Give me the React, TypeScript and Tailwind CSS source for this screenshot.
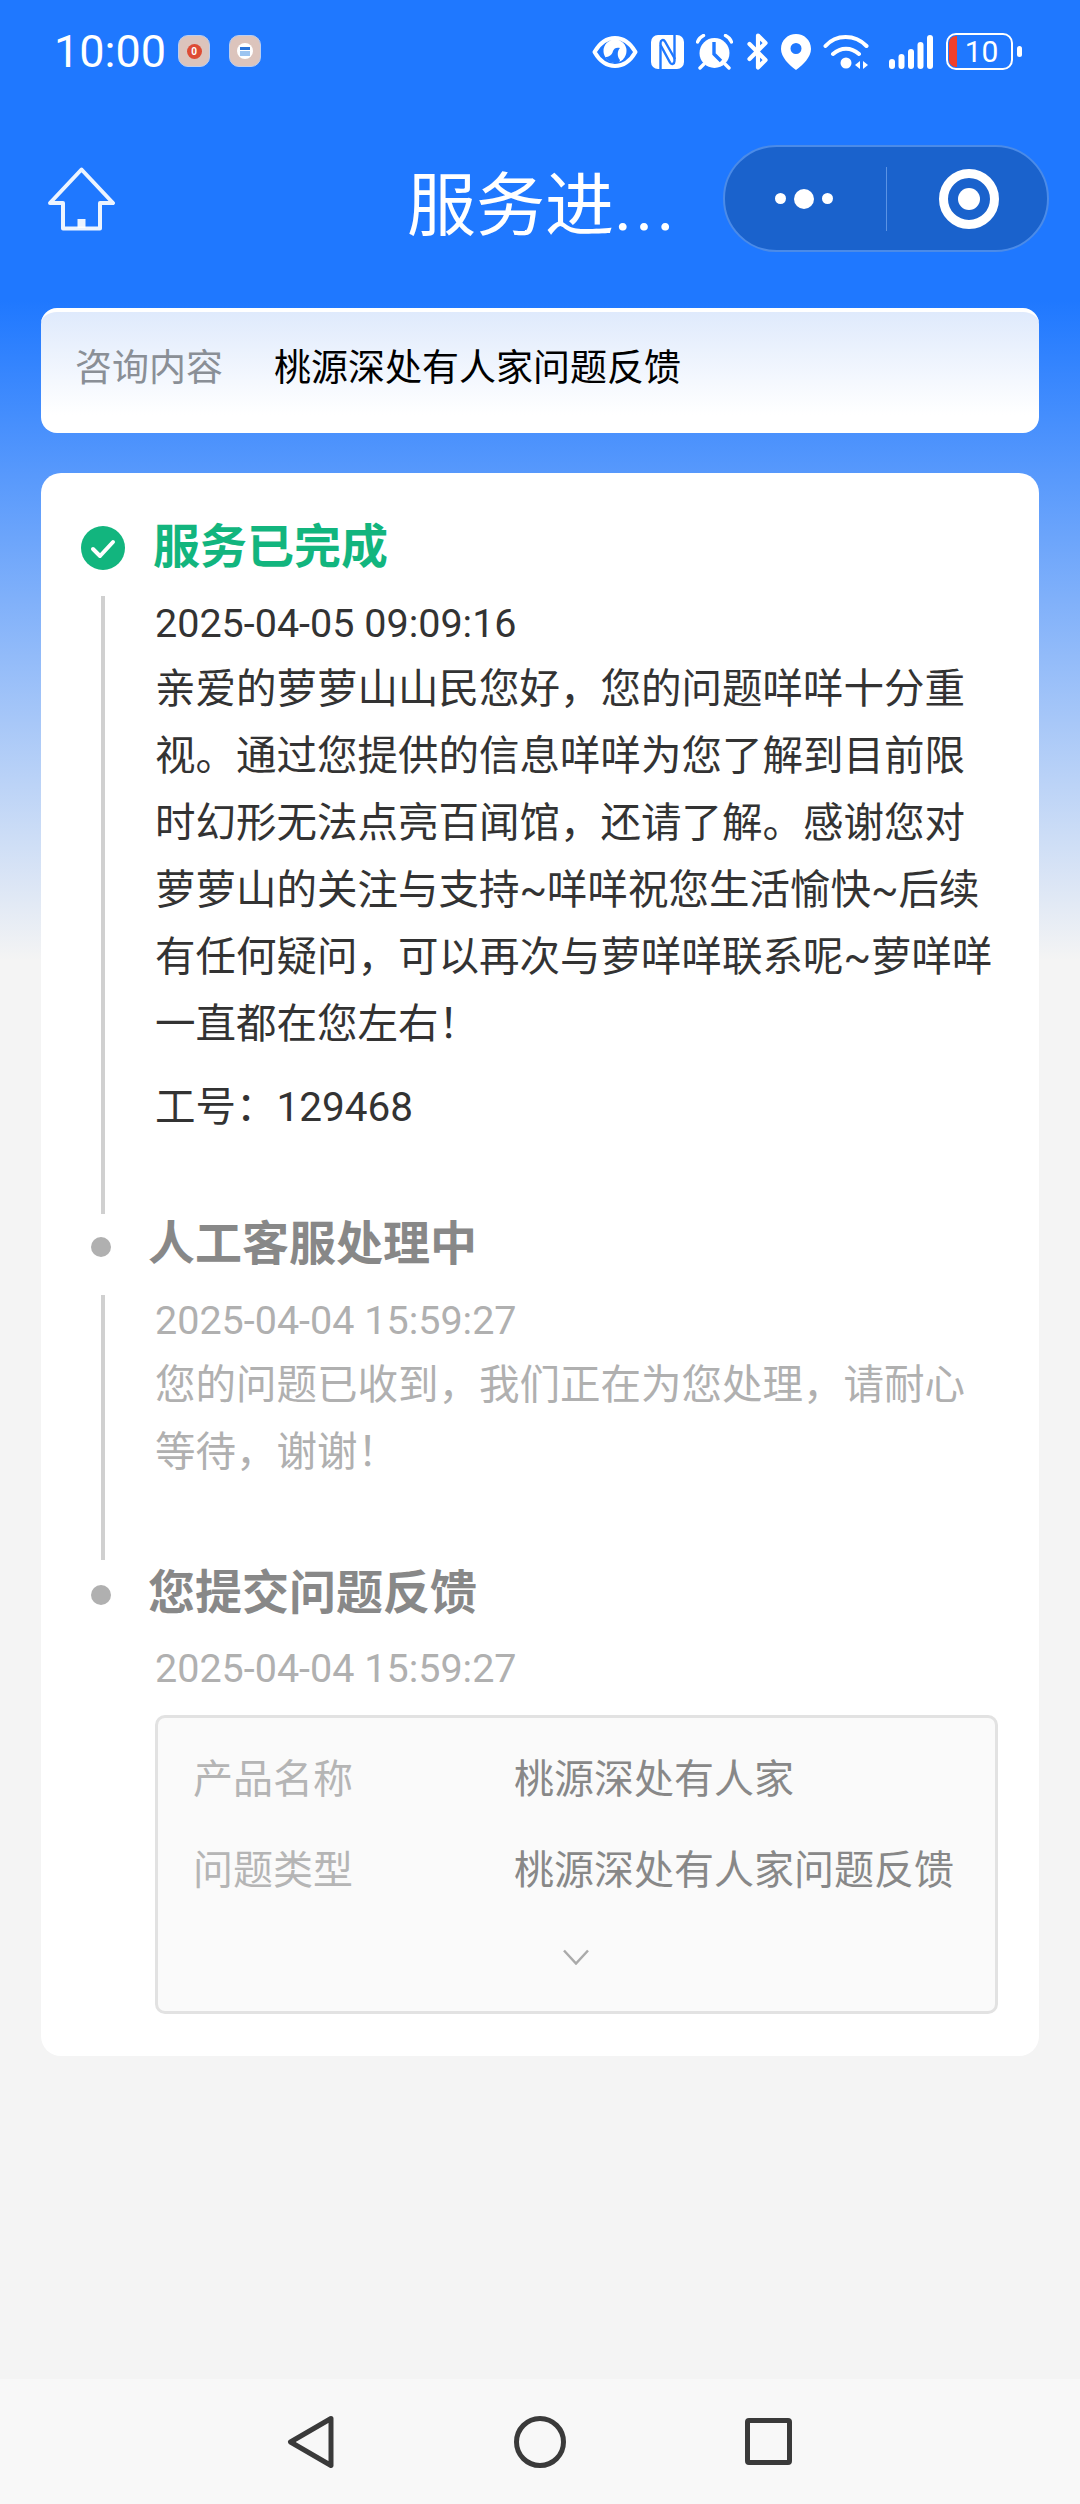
const cjk = "font-['Roboto','Noto_Sans_CJK_SC',sans-serif]";

function StatusIcons() {
  return (
    <div className="flex items-center">
      {/* eye */}
      <svg className="w-[46px] h-[32px]" viewBox="0 0 46 32">
        <path d="M2.500 16C8 6.500 15 2 23 2S38 6.500 43.500 16C38 25.500 31 30 23 30S8 25.500 2.500 16Z" fill="#1f78ff" stroke="white" strokeWidth="4" strokeLinejoin="round" />
        <circle cx="23" cy="15" r="11.500" fill="white" />
        <path d="M13 21c4 0 7-2 8-6 1-3 4-4 7-3-3 3-3 9 0 12l-1 3c-6 1-11-1-14-6Z" fill="#1f78ff" />
      </svg>
      {/* nfc */}
      <svg className="w-[33px] h-[34px] ml-[13px]" viewBox="0 0 33 34">
        <rect width="33" height="34" rx="7" fill="white" />
        <path d="M9.500 34V8c0-3 3-4 4.500-1.500L24 24" fill="none" stroke="#1f78ff" strokeWidth="2.400" />
        <path d="M23.500 0v26c0 3-3 4-4.500 1.500L9.500 10" fill="none" stroke="#1f78ff" strokeWidth="2.400" />
      </svg>
      {/* alarm */}
      <svg className="w-[37px] h-[36px] ml-[12px]" viewBox="0 0 37 36">
        <circle cx="18.500" cy="19" r="15" fill="white" />
        <path d="M18 8v12l7 7" fill="none" stroke="#1f78ff" strokeWidth="3.400" />
        <path d="M1.500 8c1-3 3-5 6-6.500M35.500 8c-1-3-3-5-6-6.500M4 34l4-4M33 34l-4-4" fill="none" stroke="white" strokeWidth="3.400" strokeLinecap="round" />
      </svg>
      {/* bluetooth, with slash */}
      <svg className="w-[21px] h-[37px] ml-[14px]" viewBox="0 0 21 37">
        <path d="M2.500 11l16 16-7.500 7.500V2.500L18.500 10 2.500 26" fill="none" stroke="white" strokeWidth="4.200" strokeLinejoin="round" strokeLinecap="round" />
      </svg>
      {/* pin */}
      <svg className="w-[30px] h-[36px] ml-[13px]" viewBox="0 0 30 36">
        <path fillRule="evenodd" d="M15 0c8 0 15 6 15 15 0 8-8 16-15 21C8 31 0 23 0 15 0 6 7 0 15 0Zm0 9a5.500 5.500 0 1 0 0 11 5.500 5.500 0 0 0 0-11Z" fill="white" />
      </svg>
      {/* wifi */}
      <svg className="w-[46px] h-[36px] ml-[12px]" viewBox="0 0 46 36">
        <path d="M2.500 12C13 0 32 0 43.500 12M10 20c8-7 18-7 26 0" fill="none" stroke="white" strokeWidth="4" strokeLinecap="round" />
        <circle cx="23" cy="29" r="5.500" fill="white" />
        <path d="M37 27v8l-5-4ZM40 27v8l5-4Z" fill="white" />
      </svg>
      {/* signal */}
      <svg className="w-[44px] h-[36px] ml-[20px]" viewBox="0 0 44 36">
        <rect x="0" y="25" width="6" height="10" rx="3" fill="white" />
        <rect x="9.500" y="20" width="6" height="15" rx="3" fill="white" />
        <rect x="19" y="15" width="6" height="20" rx="3" fill="white" />
        <rect x="28.500" y="8" width="6" height="27" rx="3" fill="white" />
        <rect x="38" y="1" width="6" height="34" rx="3" fill="white" />
      </svg>
      {/* battery */}
      <div className="relative w-[67px] h-[37px] ml-[13px] rounded-[10px] border-[2.5px] border-white flex items-center justify-center">
        <div className="absolute left-[1px] top-[1px] bottom-[1px] w-[8px] rounded-l-[7px] bg-[#f0402a]" />
        <span className="pl-[4px] text-[30px] leading-none text-white font-['Roboto',sans-serif]">10</span>
      </div>
      <div className="w-[5px] h-[11px] ml-[4px] rounded-full bg-white" />
    </div>
  );
}

function NotifyChip({ children }: { children: React.ReactNode }) {
  return (
    <div className="w-[32px] h-[32px] rounded-[10px] bg-[#dcc4bc] border border-[#b9cdf0] flex items-center justify-center">
      {children}
    </div>
  );
}

function TimelineLine({ className }: { className: string }) {
  return <div className={`absolute left-[60px] w-[4px] bg-[#d0d0d0] ${className}`} />;
}

export default function App() {
  return (
    <div className={`relative w-[1080px] h-[2504px] flex flex-col bg-[linear-gradient(to_bottom,#1f78ff_0px,#1f78ff_300px,#f4f4f4_960px,#f4f4f4_100%)] ${cjk}`}>
      {/* status bar */}
      <div className="h-[105px] pl-[54px] pr-[58px] pt-[33px] flex items-start justify-between">
        <div className="flex items-center h-[36px]">
          <span className="w-[124px] text-[45px] leading-none text-white font-['Roboto',sans-serif]">10:00</span>
          <NotifyChip>
            <div className="w-[15px] h-[15px] rounded-full bg-[#dd4b34] text-white text-[10px] leading-[15px] text-center font-bold">0</div>
          </NotifyChip>
          <div className="w-[19px]" />
          <NotifyChip>
            <div className="w-[16px] h-[16px] rounded-full bg-white flex flex-col items-center justify-center">
              <div className="w-[10px] h-[3px] bg-[#2a74d8]" />
              <div className="w-[10px] h-[5px] mt-[1px] bg-[#9cc4f0]" />
            </div>
          </NotifyChip>
        </div>
        <StatusIcons />
      </div>

      {/* nav bar */}
      <div className="h-[107px] mt-[40px] pl-[48px] pr-[31px] flex items-center">
        <svg className="w-[67px] h-[64px]" viewBox="0 0 67 64" fill="none" stroke="white" strokeOpacity="0.92" strokeWidth="4" strokeLinejoin="round" strokeLinecap="round">
          <path d="M33.500 2.500L65 36H52V61.500H15V36H2Z" />
          <path d="M33.500 61V52" strokeWidth="8" strokeLinecap="butt" />
        </svg>
        <div className="ml-[292px] pt-[16px] text-[69px] leading-[86px] text-white whitespace-nowrap">
          服务进<span className="tracking-[3px]">...</span>
        </div>
        <div className="ml-auto w-[326px] h-[107px] rounded-full bg-[#1a62cc] border-2 border-[#4b8be8] flex items-center">
          <div className="w-[161px] pr-[3px] flex items-center justify-center gap-[8px]">
            <div className="w-[11px] h-[11px] rounded-full bg-white" />
            <div className="w-[20px] h-[20px] rounded-full bg-white" />
            <div className="w-[11px] h-[11px] rounded-full bg-white" />
          </div>
          <div className="w-[1px] h-[64px] bg-[#5b93e4]" />
          <div className="flex-1 pl-[4px] flex items-center justify-center">
            <div className="w-[60px] h-[60px] rounded-full border-[9px] border-white flex items-center justify-center">
              <div className="w-[22px] h-[22px] rounded-full bg-white" />
            </div>
          </div>
        </div>
      </div>

      {/* query card */}
      <div className="mx-[41px] mt-[56px] h-[125px] rounded-[16px] border-t-[4px] border-white bg-[linear-gradient(to_bottom,#dfeafc,#ffffff_85%)] pl-[34px] pb-[8px] flex items-center text-[37px] leading-none">
        <span className="w-[199px] text-[#8a8f96]">咨询内容</span>
        <span className="text-black">桃源深处有人家问题反馈</span>
      </div>

      {/* timeline card */}
      <div className="relative mx-[41px] mt-[40px] h-[1583px] rounded-[20px] bg-white pl-[114px] pr-[41px] pt-[44px]">
        <svg className="absolute left-[40px] top-[53px] w-[44px] h-[44px]" viewBox="0 0 44 44">
          <circle cx="22" cy="22" r="22" fill="#12b57e" />
          <path d="M12 23l7 7 13-14" fill="none" stroke="white" strokeWidth="4" strokeLinecap="round" strokeLinejoin="round" />
        </svg>
        <TimelineLine className="top-[123px] h-[618px]" />
        <div className="-ml-[2px] h-[60px] text-[47px] leading-[60px] font-bold text-[#12b57e]">服务已完成</div>
        <div className="mt-[22px] text-[39.5px] leading-[50px] text-[#333333]">2025-04-05 09:09:16</div>
        <div className="mt-[7px] w-[842px] text-[40.5px] leading-[67px] text-[#333333]">
          亲爱的萝萝山山民您好，您的问题咩咩十分重视。通过您提供的信息咩咩为您了解到目前限时幻形无法点亮百闻馆，还请了解。感谢您对萝萝山的关注与支持~咩咩祝您生活愉快~后续有任何疑问，可以再次与萝咩咩联系呢~萝咩咩一直都在您左右！
        </div>
        <div className="mt-[24px] text-[40.5px] leading-[50px] text-[#333333]">工号：129468</div>

        <div className="absolute left-[50px] top-[764px] w-[20px] h-[20px] rounded-full bg-[#b0b0b0]" />
        <TimelineLine className="top-[822px] h-[265px]" />
        <div className="-ml-[7px] mt-[82px] h-[60px] text-[47px] leading-[60px] font-bold text-[#888888]">人工客服处理中</div>
        <div className="mt-[22px] text-[39.5px] leading-[50px] text-[#b0b0b0]">2025-04-04 15:59:27</div>
        <div className="mt-[6px] w-[842px] text-[40.5px] leading-[67px] text-[#b0b0b0]">您的问题已收到，我们正在为您处理，请耐心等待，谢谢！</div>

        <div className="absolute left-[50px] top-[1112px] w-[20px] h-[20px] rounded-full bg-[#b0b0b0]" />
        <div className="-ml-[7px] mt-[77px] h-[60px] text-[47px] leading-[60px] font-bold text-[#888888]">您提交问题反馈</div>
        <div className="mt-[21px] text-[39.5px] leading-[50px] text-[#b0b0b0]">2025-04-04 15:59:27</div>

        <div className="mt-[21px] h-[299px] rounded-[10px] border-[3px] border-[#e2e2e2] bg-[#fafafa] pl-[35px] pt-[37px] text-[40px] leading-[50px]">
          <div className="flex">
            <span className="w-[321px] text-[#b5b5b5]">产品名称</span>
            <span className="text-[#888888]">桃源深处有人家</span>
          </div>
          <div className="flex mt-[41px]">
            <span className="w-[321px] text-[#b5b5b5]">问题类型</span>
            <span className="text-[#888888]">桃源深处有人家问题反馈</span>
          </div>
          <svg className="w-[26px] h-[16px] mt-[53px] ml-[370px]" viewBox="0 0 26 16" fill="none" stroke="#aaaaaa" strokeWidth="2.500">
            <path d="M1 1.500L13 14.500L25 1.500" />
          </svg>
        </div>
      </div>

      {/* android nav */}
      <div className="mt-auto h-[125px] bg-[#f8f8f8] flex items-center">
        <svg className="ml-[286px] w-[50px] h-[54px]" viewBox="0 0 50 54" fill="none" stroke="#3a3a3a" strokeWidth="5" strokeLinejoin="round">
          <path d="M45 3.500L4.500 27L45 50.500Z" />
        </svg>
        <div className="ml-[178px] w-[52px] h-[52px] rounded-full border-[5px] border-[#3a3a3a]" />
        <div className="ml-[179px] w-[47px] h-[47px] rounded-[4px] border-[5px] border-[#3a3a3a]" />
      </div>
    </div>
  );
}
